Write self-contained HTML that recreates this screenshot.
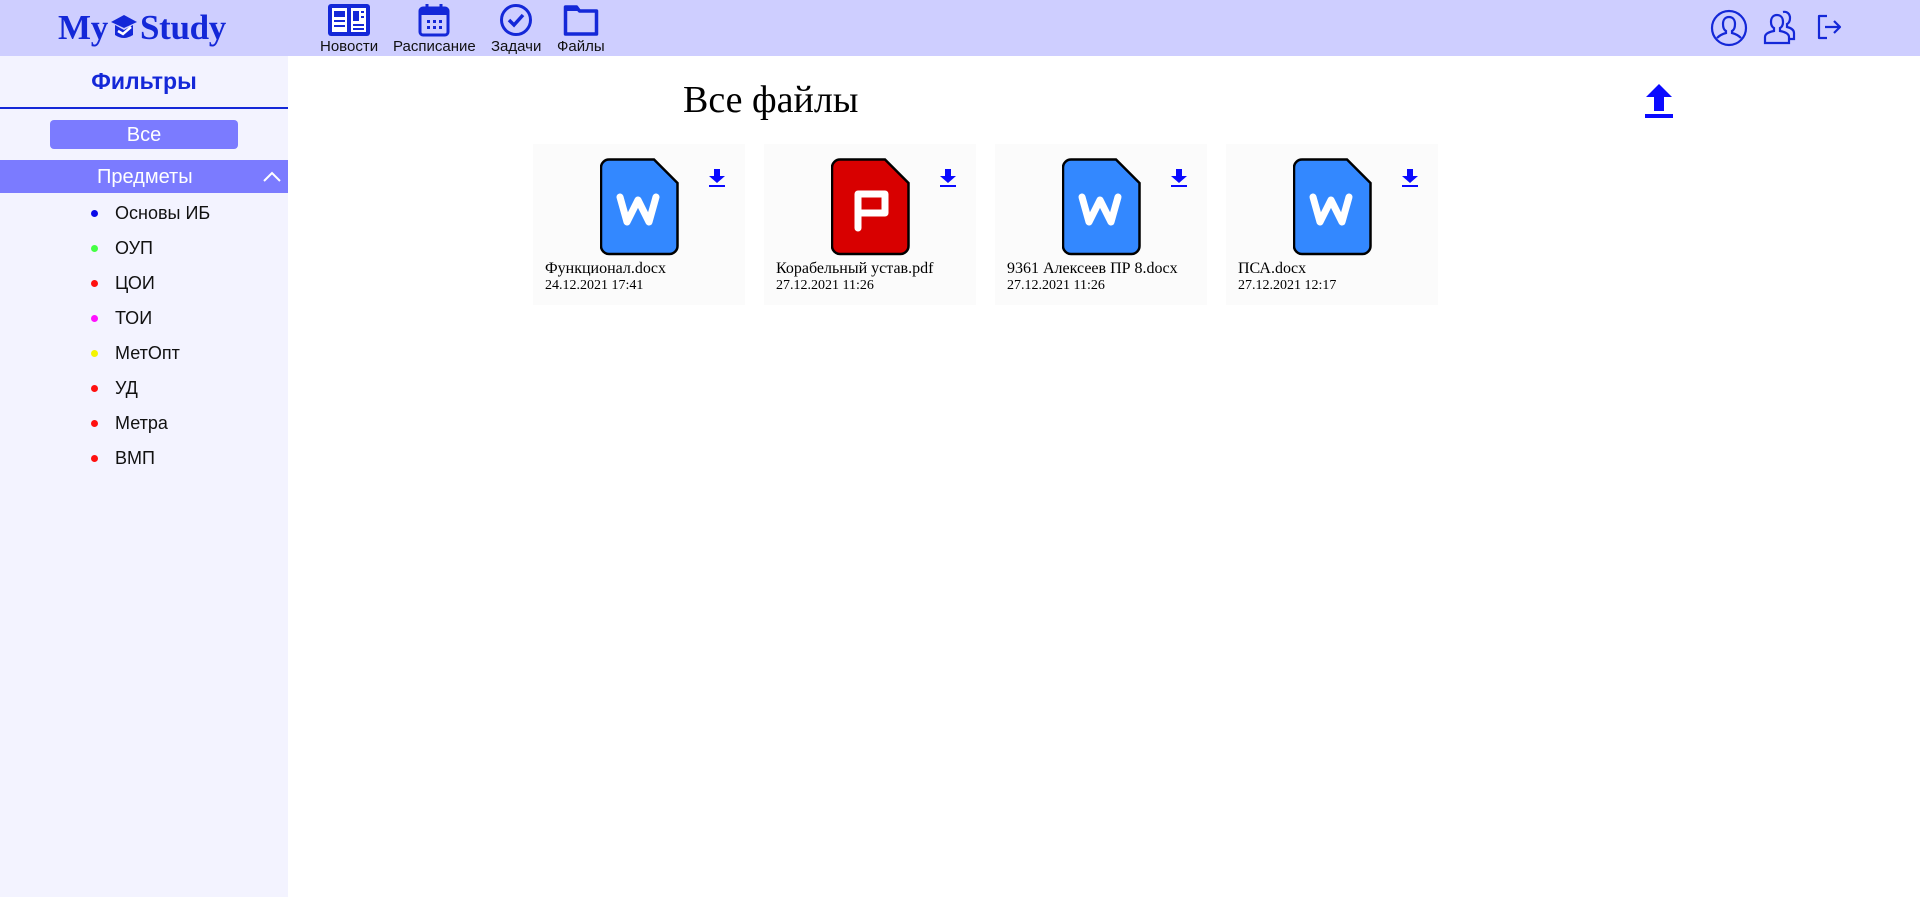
<!DOCTYPE html>
<html><head><meta charset="utf-8"><style>
*{margin:0;padding:0;box-sizing:border-box}
body{width:1920px;height:897px;overflow:hidden;background:#fff;font-family:"Liberation Sans",sans-serif;position:relative}
.hdr{position:absolute;left:0;top:0;width:1920px;height:56px;background:#ceceff}
.logo{position:absolute;left:58px;top:8px;font:bold 35px "Liberation Serif",serif;color:#1428d8;letter-spacing:-0.3px}
.nav{position:absolute;top:3px;text-align:center;font-size:15px;color:#111}
.nav svg{display:block;margin:0 auto 1px}
.side{position:absolute;left:0;top:56px;width:288px;height:841px;background:#f3f3ff}
.ft{position:absolute;left:0;top:68px;width:288px;text-align:center;font-weight:bold;font-size:23px;color:#1428d8}
.line{position:absolute;left:0;top:107px;width:288px;height:2px;background:#1428d8}
.all{position:absolute;left:50px;top:120px;width:188px;height:29px;background:#7b7bff;border-radius:4px;color:#fff;text-align:center;font-size:20px;line-height:31px}
.pr{position:absolute;left:0;top:160px;width:288px;height:33px;background:#7b7bff;color:#fff;font-size:20px;line-height:35px}
.it{position:absolute;left:115px;font-size:18px;color:#111}
.dot{position:absolute;left:91px;width:7px;height:7px;border-radius:50%}
.title{position:absolute;left:683px;top:78px;font:38px "Liberation Serif",serif;color:#000}
.card{position:absolute;top:144px;width:212px;height:161px;background:#fbfbfb}
.card .doc{position:absolute;left:67px;top:14px}
.card .dl{position:absolute;left:175px;top:24px}
.card .nm{position:absolute;left:12px;top:116px;font:16px "Liberation Serif",serif;color:#000;white-space:nowrap}
.card .dt{position:absolute;left:12px;top:134px;font:14px "Liberation Serif",serif;color:#000}
</style></head><body>
<div class="hdr">
<div class="logo">My<svg width="30" height="28" viewBox="0 0 30 28" style="vertical-align:-2px;margin:0 1px"><path d="M2 9 L15 2 L28 9 L15 15Z" fill="#1428d8"/><path d="M6 12 V22 Q15 28 24 22 V12 L15 17Z" fill="#1428d8"/><path d="M9 18 L14 21 L22 14" stroke="#fff" stroke-width="2.5" fill="none"/></svg>Study</div>
<div class="nav" style="left:320px"><svg width="44" height="34" viewBox="0 0 44 34"><rect x="1" y="1" width="42" height="32" rx="3" fill="#1428d8"/><rect x="5" y="5" width="15" height="24" fill="#fff"/><rect x="24" y="5" width="15" height="24" fill="#fff"/><path d="M7 8h11v6H7zM7 17h11v2H7zM7 22h11v2H7zM26 8h6v10h-6zM34 8h3v2h-3zM34 13h3v2h-3zM26 21h11v2H26zM26 25h11v2H26z" fill="#1428d8"/></svg>Новости</div>
<div class="nav" style="left:393px"><svg width="32" height="34" viewBox="0 0 32 34"><rect x="2" y="5" width="28" height="27" rx="3" fill="none" stroke="#1428d8" stroke-width="3"/><rect x="2" y="5" width="28" height="7" fill="#1428d8"/><path d="M9 1v7M23 1v7" stroke="#1428d8" stroke-width="3"/><path d="M9 17h3v3H9zM15 17h3v3h-3zM21 17h3v3h-3zM9 23h3v3H9zM15 23h3v3h-3zM21 23h3v3h-3z" fill="#1428d8"/></svg>Расписание</div>
<div class="nav" style="left:491px"><svg width="34" height="34" viewBox="0 0 34 34"><circle cx="17" cy="17" r="14.5" fill="none" stroke="#1428d8" stroke-width="3"/><path d="M10 17l5 5 9-10" fill="none" stroke="#1428d8" stroke-width="3.5"/></svg>Задачи</div>
<div class="nav" style="left:557px"><svg width="36" height="34" viewBox="0 0 36 34"><path d="M2.5 4h11l3 4h17v23h-31z" fill="none" stroke="#1428d8" stroke-width="3.5" stroke-linejoin="round"/><path d="M2.5 4h11l3 4h-14z" fill="#1428d8"/></svg>Файлы</div>
<svg style="position:absolute;left:1710px;top:9px" width="38" height="38" viewBox="0 0 38 38" fill="none" stroke="#1428d8" stroke-width="2.2"><circle cx="19" cy="19" r="17"/><path d="M19 8c-4 0-6 3-6 7 0 3 1 6 3 7v2c-4 1-7 3-9 5M19 8c4 0 6 3 6 7 0 3-1 6-3 7v2c4 1 7 3 9 5"/></svg>
<svg style="position:absolute;left:1763px;top:9px" width="38" height="38" viewBox="0 0 38 38" fill="none" stroke="#1428d8" stroke-width="2.2"><path d="M14 6c-4 0-6 3-6 7 0 3 1 5 3 6v3c-5 1-9 3-9 6v6h24v-6c0-3-4-5-9-6v-3c2-1 3-3 3-6 0-4-2-7-6-7z"/><path d="M20 3c4-1 7 2 7 6 0 3-1 5-3 6v3c4 1 7 3 7 6v6h-5"/></svg>
<svg style="position:absolute;left:1815px;top:12px" width="28" height="30" viewBox="0 0 28 30" fill="none" stroke="#1428d8" stroke-width="2.2" stroke-linejoin="round"><path d="M12 4H4v22h8"/><path d="M10 15h15M19 9l6 6-6 6"/></svg>
</div>
<div class="side"></div>
<div class="ft">Фильтры</div>
<div class="line"></div>
<div class="all">Все</div>
<div class="pr"><span style="position:absolute;left:97px">Предметы</span><svg style="position:absolute;left:262px;top:10px" width="20" height="13" viewBox="0 0 20 13"><path d="M2 11l8-8 8 8" fill="none" stroke="#fff" stroke-width="2"/></svg></div>
<div class="dot" style="top:210px;background:#0a0ae8"></div><div class="it" style="top:203px">Основы ИБ</div>
<div class="dot" style="top:245px;background:#44ff44"></div><div class="it" style="top:238px">ОУП</div>
<div class="dot" style="top:280px;background:#ff1010"></div><div class="it" style="top:273px">ЦОИ</div>
<div class="dot" style="top:315px;background:#ff10ff"></div><div class="it" style="top:308px">ТОИ</div>
<div class="dot" style="top:350px;background:#f4f400"></div><div class="it" style="top:343px">МетОпт</div>
<div class="dot" style="top:385px;background:#ff1010"></div><div class="it" style="top:378px">УД</div>
<div class="dot" style="top:420px;background:#ff1010"></div><div class="it" style="top:413px">Метра</div>
<div class="dot" style="top:455px;background:#ff1010"></div><div class="it" style="top:448px">ВМП</div>
<div class="title">Все файлы</div>
<svg style="position:absolute;left:1644px;top:83px" width="30" height="36" viewBox="0 0 30 36"><path d="M15 1L28 14H20V28H10V14H2Z" fill="#0a0aff"/><rect x="1" y="31" width="28" height="4" fill="#0a0aff"/></svg>

<div class="card" style="left:533px"><svg class="doc" width="79" height="98" viewBox="0 0 79 98"><path d="M9 1.5H54L77.5 25V88a8 8 0 0 1-8 8H9a8 8 0 0 1-8-8V9.5a8 8 0 0 1 8-8z" fill="#3388ff" stroke="#000" stroke-width="2.5"/><path d="M20 39l7 25 11-22 11 22 7-25" fill="none" stroke="#fff" stroke-width="7" stroke-linecap="round" stroke-linejoin="round"/></svg><svg class="dl" width="18" height="20" viewBox="0 0 18 20"><path d="M6 1h6v7h5L9 15 1 8h5z" fill="#0a0aff"/><rect x="1" y="17" width="16" height="2" fill="#0a0aff"/></svg><div class="nm">Функционал.docx</div><div class="dt">24.12.2021 17:41</div></div>

<div class="card" style="left:764px"><svg class="doc" width="79" height="98" viewBox="0 0 79 98"><path d="M9 1.5H54L77.5 25V88a8 8 0 0 1-8 8H9a8 8 0 0 1-8-8V9.5a8 8 0 0 1 8-8z" fill="#d80000" stroke="#000" stroke-width="2.5"/><path d="M27 70V36h27v19H27" fill="none" stroke="#fff" stroke-width="7" stroke-linecap="round" stroke-linejoin="round"/></svg><svg class="dl" width="18" height="20" viewBox="0 0 18 20"><path d="M6 1h6v7h5L9 15 1 8h5z" fill="#0a0aff"/><rect x="1" y="17" width="16" height="2" fill="#0a0aff"/></svg><div class="nm">Корабельный устав.pdf</div><div class="dt">27.12.2021 11:26</div></div>

<div class="card" style="left:995px"><svg class="doc" width="79" height="98" viewBox="0 0 79 98"><path d="M9 1.5H54L77.5 25V88a8 8 0 0 1-8 8H9a8 8 0 0 1-8-8V9.5a8 8 0 0 1 8-8z" fill="#3388ff" stroke="#000" stroke-width="2.5"/><path d="M20 39l7 25 11-22 11 22 7-25" fill="none" stroke="#fff" stroke-width="7" stroke-linecap="round" stroke-linejoin="round"/></svg><svg class="dl" width="18" height="20" viewBox="0 0 18 20"><path d="M6 1h6v7h5L9 15 1 8h5z" fill="#0a0aff"/><rect x="1" y="17" width="16" height="2" fill="#0a0aff"/></svg><div class="nm">9361 Алексеев ПР 8.docx</div><div class="dt">27.12.2021 11:26</div></div>

<div class="card" style="left:1226px"><svg class="doc" width="79" height="98" viewBox="0 0 79 98"><path d="M9 1.5H54L77.5 25V88a8 8 0 0 1-8 8H9a8 8 0 0 1-8-8V9.5a8 8 0 0 1 8-8z" fill="#3388ff" stroke="#000" stroke-width="2.5"/><path d="M20 39l7 25 11-22 11 22 7-25" fill="none" stroke="#fff" stroke-width="7" stroke-linecap="round" stroke-linejoin="round"/></svg><svg class="dl" width="18" height="20" viewBox="0 0 18 20"><path d="M6 1h6v7h5L9 15 1 8h5z" fill="#0a0aff"/><rect x="1" y="17" width="16" height="2" fill="#0a0aff"/></svg><div class="nm">ПСА.docx</div><div class="dt">27.12.2021 12:17</div></div>
</body></html>
